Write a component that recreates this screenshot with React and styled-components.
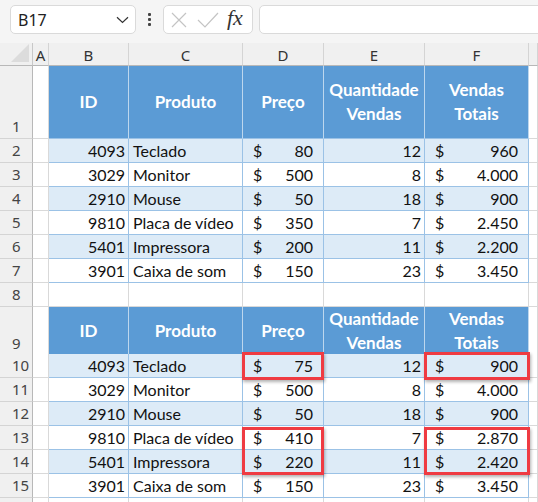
import React from 'react';
import styled, { createGlobalStyle, css } from 'styled-components';

const GlobalStyle = createGlobalStyle`
    html, body {
        margin: 0;
        padding: 0;
        background: #ffffff;
        overflow: hidden;
    }
    body {
        font-family: "Lato", "Liberation Sans", sans-serif;
    }
`;

const COLS = '33px 16px 80px 114px 81px 101px 104px 1fr';

const firstTable = [
    [4093, 'Teclado', 80, 12, '960'],
    [3029, 'Monitor', 500, 8, '4.000'],
    [2910, 'Mouse', 50, 18, '900'],
    [9810, 'Placa de vídeo', 350, 7, '2.450'],
    [5401, 'Impressora', 200, 11, '2.200'],
    [3901, 'Caixa de som', 150, 23, '3.450'],
];

const secondTable = [
    [4093, 'Teclado', 75, 12, '900'],
    [3029, 'Monitor', 500, 8, '4.000'],
    [2910, 'Mouse', 50, 18, '900'],
    [9810, 'Placa de vídeo', 410, 7, '2.870'],
    [5401, 'Impressora', 220, 11, '2.420'],
    [3901, 'Caixa de som', 150, 23, '3.450'],
];

// which cells of the second table get a red box: row index -> box offset/height
const marked = { 0: { top: -2, height: 28 }, 3: { top: 1, height: 48 } };

const App = () => {
    const renderBody = (rows, startNo, withMarks) =>
        rows.map((r, i) => {
            const band = i % 2 === 0;
            const mark = withMarks ? marked[i] : null;
            return (
                <Row key={startNo + i} $h={24}>
                    <RowNum>{startNo + i}</RowNum>
                    <Cell />
                    <Cell $band={band} $right>{r[0]}</Cell>
                    <Cell $band={band}>{r[1]}</Cell>
                    <Cell $band={band} $money>
                        <span>$</span><span>{r[2]}</span>
                        {mark && <Highlight style={{ top: mark.top, height: mark.height }} />}
                    </Cell>
                    <Cell $band={band} $right>{r[3]}</Cell>
                    <Cell $band={band} $money>
                        <span>$</span><span>{r[4]}</span>
                        {mark && <Highlight $wide style={{ top: mark.top, height: mark.height }} />}
                    </Cell>
                    <Cell />
                </Row>
            );
        });

    const renderHeader = (no, h) => (
        <Row $h={h}>
            <RowNum>{no}</RowNum>
            <Cell />
            <HeadCell>ID</HeadCell>
            <HeadCell>Produto</HeadCell>
            <HeadCell>Preço</HeadCell>
            <HeadCell>Quantidade<br />Vendas</HeadCell>
            <HeadCell>Vendas<br />Totais</HeadCell>
            <Cell />
        </Row>
    );

    return (
        <>
            <GlobalStyle />
            <Toolbar>
                <NameBox>
                    <span>B17</span>
                    <svg width="13" height="8" viewBox="0 0 13 8">
                        <path d="M1 1.2 L6.5 6.5 L12 1.2" fill="none" stroke="#333" strokeWidth="1.2" />
                    </svg>
                </NameBox>
                <Dots>
                    <i /><i /><i />
                </Dots>
                <FxBox>
                    <svg width="16" height="16" viewBox="0 0 16 16">
                        <path d="M1 1 L15 15 M15 1 L1 15" stroke="#c4c4c4" strokeWidth="1.2" />
                    </svg>
                    <svg width="22" height="16" viewBox="0 0 22 16">
                        <path d="M1 8 L8 15 L21 1" fill="none" stroke="#c4c4c4" strokeWidth="1.2" />
                    </svg>
                    <Fx>fx</Fx>
                </FxBox>
                <FormulaInput />
            </Toolbar>

            <Sheet>
                <Row $h={23}>
                    <Corner>
                        <svg width="18" height="18" viewBox="0 0 18 18">
                            <path d="M18 0 L18 18 L0 18 Z" fill="#dcdcdc" />
                        </svg>
                    </Corner>
                    {['A', 'B', 'C', 'D', 'E', 'F', ''].map((l, i) => (
                        <ColHead key={i}>{l}</ColHead>
                    ))}
                </Row>
                {renderHeader(1, 73)}
                {renderBody(firstTable, 2, false)}
                <Row $h={24}>
                    <RowNum>8</RowNum>
                    {Array.from({ length: 7 }).map((_, i) => <Cell key={i} />)}
                </Row>
                {renderHeader(9, 47)}
                {renderBody(secondTable, 10, true)}
                <Row $h={24}>
                    <RowNum />
                    {Array.from({ length: 7 }).map((_, i) => <Cell key={i} />)}
                </Row>
            </Sheet>
        </>
    );
};

const Toolbar = styled.div`
    height: 43px;
    box-sizing: border-box;
    background: #f5f5f5;
    display: flex;
    align-items: flex-start;
    padding: 5px 0 0 10px;
    overflow: hidden;
`;

const boxBase = css`
    height: 29px;
    box-sizing: border-box;
    background: #ffffff;
    border: 1px solid #dadada;
    border-radius: 5px;
`;

const NameBox = styled.div`
    ${boxBase};
    width: 126px;
    display: flex;
    align-items: center;
    justify-content: space-between;
    padding: 0 6px 0 7px;
    font-family: "Noto Sans", "Open Sans", sans-serif;
    font-size: 16px;
    color: #222;
`;

const Dots = styled.div`
    width: 27px;
    display: flex;
    flex-direction: column;
    align-items: center;
    gap: 2px;
    padding-top: 8px;

    i {
        width: 3px;
        height: 3px;
        background: #444;
        border-radius: 1px;
    }
`;

const FxBox = styled.div`
    ${boxBase};
    width: 90px;
    display: flex;
    align-items: center;
    gap: 10px;
    padding-left: 7px;
`;

const Fx = styled.span`
    font-family: "Liberation Serif", "DejaVu Serif", serif;
    font-style: italic;
    font-size: 22px;
    color: #333;
    margin-left: -2px;
    line-height: 1;
    padding-bottom: 3px;
`;

const FormulaInput = styled.div`
    ${boxBase};
    flex: 1;
    margin-left: 6px;
    margin-right: -10px;
`;

const Sheet = styled.div`
    display: flex;
    flex-direction: column;
`;

const Row = styled.div`
    display: grid;
    grid-template-columns: ${COLS};
    height: ${p => p.$h}px;
`;

const Corner = styled.div`
    background: #f0f0f0;
    border-right: 1px solid #c8c8c8;
    border-bottom: 1px solid #b8b8b8;
    box-sizing: border-box;
    display: flex;
    align-items: flex-end;
    justify-content: flex-end;
    padding: 0 3px 3px 0;
`;

const ColHead = styled.div`
    background: #f0f0f0;
    border-right: 1px solid #d4d4d4;
    border-bottom: 1px solid #b8b8b8;
    box-sizing: border-box;
    display: flex;
    align-items: center;
    justify-content: center;
    font-family: "Noto Sans", "Open Sans", sans-serif;
    font-size: 15px;
    color: #333;
    padding-top: 1px;
`;

const RowNum = styled.div`
    background: #f0f0f0;
    border-right: 1px solid #b8b8b8;
    border-bottom: 1px solid #d4d4d4;
    box-sizing: border-box;
    display: flex;
    align-items: flex-end;
    padding: 0 0 2px 12px;
    font-family: "Noto Sans", "Open Sans", sans-serif;
    font-size: 15px;
    color: #444;
`;

const Cell = styled.div`
    position: relative;
    box-sizing: border-box;
    border-right: 1px solid #d9d9d9;
    border-bottom: 1px solid #d9d9d9;
    background: #ffffff;
    display: flex;
    align-items: flex-end;
    padding: 0 4px 2px 4px;
    font-size: 16px;
    color: #111;
    white-space: nowrap;

    ${p => p.$band !== undefined && css`
        border-color: #9bc2e6;
        background: ${p.$band ? '#ddebf7' : '#ffffff'};
    `}

    ${p => p.$right && css`
        justify-content: flex-end;
        padding-right: 3px;
    `}

    ${p => p.$money && css`
        justify-content: space-between;
        padding: 0 10px 2px 10px;
    `}
`;

const HeadCell = styled.div`
    box-sizing: border-box;
    background: #5b9bd5;
    border-right: 1px solid #bdd7ee;
    border-bottom: 1px solid #9bc2e6;
    display: flex;
    align-items: center;
    justify-content: center;
    text-align: center;
    font-size: 17px;
    font-weight: 700;
    line-height: 24px;
    color: #ffffff;
`;

const Highlight = styled.div`
    position: absolute;
    left: -1px;
    width: ${p => (p.$wide ? 106 : 82)}px;
    box-sizing: border-box;
    border: 3px solid #ef3b42;
    box-shadow: 1px 2px 3px rgba(0, 0, 0, 0.3);
    pointer-events: none;
    z-index: 2;
`;

export default App;
